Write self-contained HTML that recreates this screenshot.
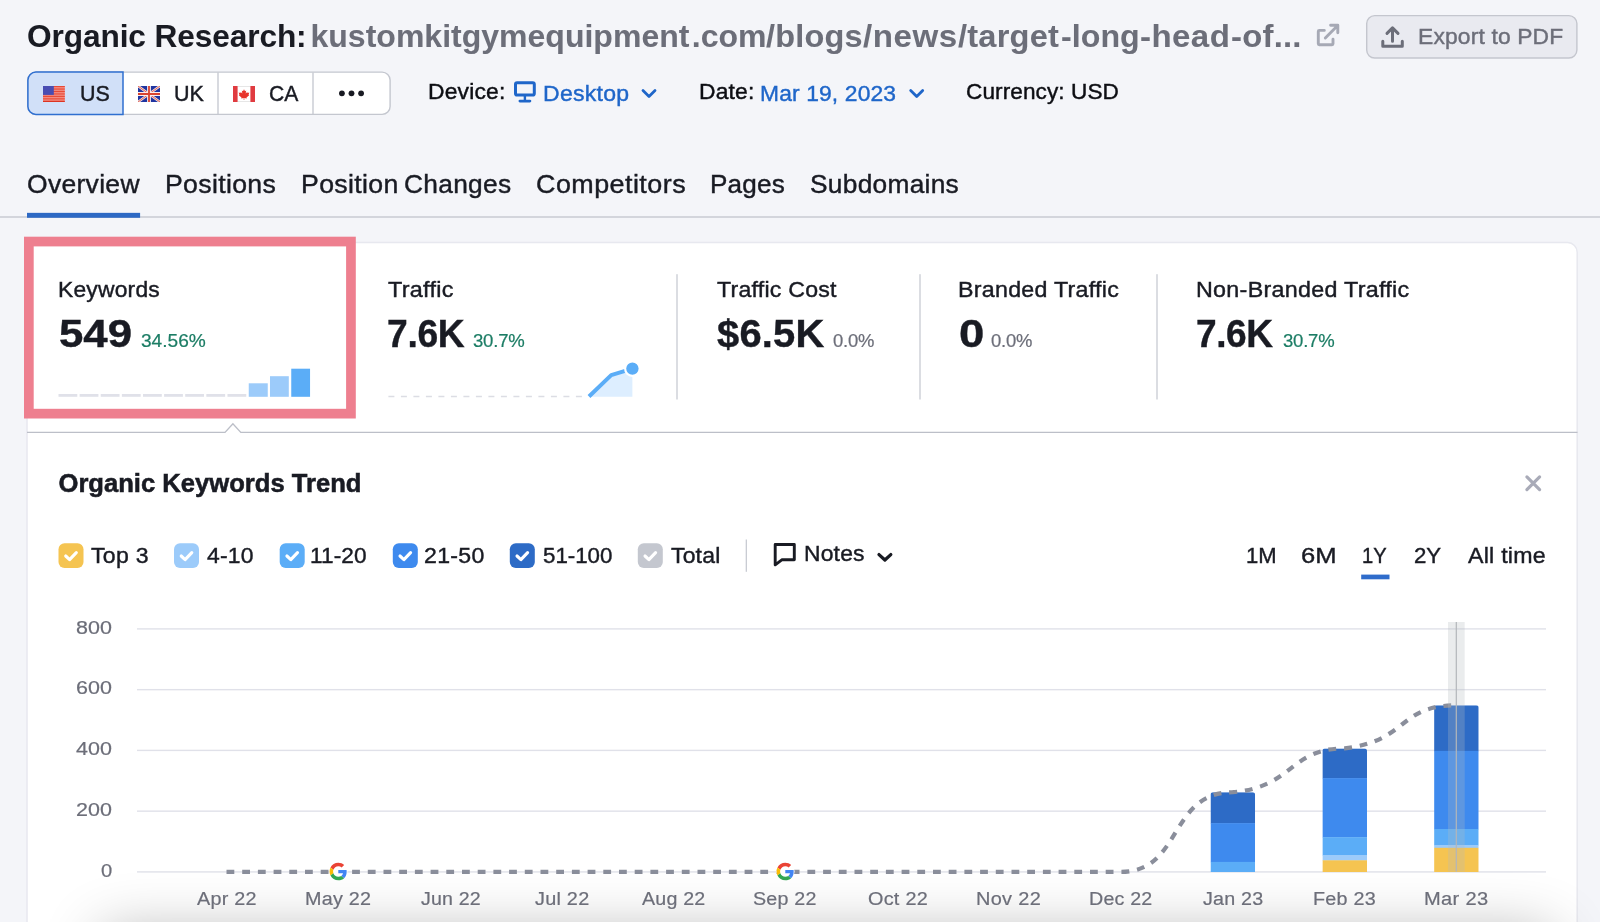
<!DOCTYPE html>
<html lang="en"><head><meta charset="utf-8"><title>Organic Research</title>
<style>
html,body{margin:0;padding:0;}
body{width:1600px;height:922px;overflow:hidden;position:relative;background:#f4f5f9;font-family:"Liberation Sans",sans-serif;}
svg#g{position:absolute;left:0;top:0;width:1600px;height:922px;display:block;}
.shd{position:absolute;left:102px;top:933px;width:1450px;height:80px;box-shadow:0 0 58px 0 rgba(0,0,0,0.30);}
.tx{position:absolute;left:0;top:0;width:1600px;height:922px;will-change:transform;}
.t{position:absolute;white-space:nowrap;line-height:1;transform-origin:0 50%;-webkit-text-stroke:0.42px currentColor;}

</style></head>
<body>
<svg id="g" width="1600" height="922" viewBox="0 0 1600 922">
<rect x="27.9" y="72.1" width="362.2" height="42.3" rx="8" fill="#fff" stroke="#c4c7cf" stroke-width="1.4"/>
<path d="M123 72.1 H35.9 a8 8 0 0 0 -8 8 V106.4 a8 8 0 0 0 8 8 H123 Z" fill="#d1e0f8" stroke="#2f6fd0" stroke-width="1.5"/>
<path d="M218 72.5V114M313 72.5V114" stroke="#c4c7cf" stroke-width="1.3"/>
<circle cx="341.9" cy="93.3" r="2.9" fill="#191b23"/>
<circle cx="351.5" cy="93.3" r="2.9" fill="#191b23"/>
<circle cx="361.1" cy="93.3" r="2.9" fill="#191b23"/>
<g transform="translate(43,86)"><rect width="21.8" height="16" fill="#f48b80"/><rect y="0" width="21.8" height="1.1" fill="#e84a36"/><rect y="2.5" width="21.8" height="1.1" fill="#e84a36"/><rect y="4.95" width="21.8" height="1.1" fill="#e84a36"/><rect y="7.4" width="21.8" height="1.1" fill="#e84a36"/><rect y="9.85" width="21.8" height="1.1" fill="#e84a36"/><rect y="12.3" width="21.8" height="1.1" fill="#e84a36"/><rect y="14.8" width="21.8" height="1.2" fill="#dc3422"/><rect width="10.8" height="8.9" fill="#494db2"/></g>
<g transform="translate(138,86)"><clipPath id="uk"><rect width="22" height="16"/></clipPath><g clip-path="url(#uk)"><rect width="22" height="16" fill="#1f34a0"/><path d="M0 0L22 16M22 0L0 16" stroke="#f4dcdc" stroke-width="2.5"/><path d="M0 0L22 16M22 0L0 16" stroke="#de5a4b" stroke-width="0.9"/><path d="M11 0V16M0 8H22" stroke="#fbeeee" stroke-width="3.8"/><path d="M11 0V16M0 8H22" stroke="#d9432f" stroke-width="1.8"/></g></g>
<g transform="translate(233,86)"><rect width="22" height="16" fill="#fff"/><rect x="4.6" width="12.8" height="0.9" fill="#e4e4e4"/><rect x="4.6" y="15.1" width="12.8" height="0.9" fill="#e4e4e4"/><rect width="4.6" height="16" fill="#e03b40"/><rect x="17.4" width="4.6" height="16" fill="#e03b40"/><path d="M11 3.2l1 2 1.2-.6-.5 2.9 1.5-1.5.4.9 1.7-.3-.7 2.2.6.4-2.7 2.2.3 1-2.5-.4v2.1h-.6v-2.1l-2.5.4.3-1-2.7-2.2.6-.4-.7-2.2 1.7.3.4-.9 1.5 1.5-.5-2.9 1.2.6z" fill="#e8332a"/></g>
<g fill="none" stroke="#1f66c9" stroke-width="3" stroke-linejoin="round" stroke-linecap="round"><rect x="515.5" y="82.7" width="18.8" height="12.4" rx="1.6"/><path d="M524.9 96.5V100.4" stroke-width="2.4"/><path d="M519.9 101.1H529.9" stroke-width="2.8"/></g>
<path d="M643.0 90.5l6 6 6-6" fill="none" stroke="#1f66c9" stroke-width="2.8" stroke-linecap="round" stroke-linejoin="round"/>
<path d="M910.7 90.5l6 6 6-6" fill="none" stroke="#1f66c9" stroke-width="2.8" stroke-linecap="round" stroke-linejoin="round"/>
<g fill="none" stroke="#a6a9b5" stroke-width="2.9" stroke-linejoin="round" stroke-linecap="round"><path d="M1324.3 30.4H1319.3a1 1 0 0 0 -1 1V43.8a1 1 0 0 0 1 1H1332a1 1 0 0 0 1-1V39.2"/><path d="M1325.3 38L1337.2 26M1330.6 25.3H1337.8V32.8"/></g>
<rect x="1366.7" y="15.6" width="210.2" height="42.4" rx="8" fill="#e9eaf0" stroke="#c4c6ce" stroke-width="1.4"/>
<g fill="none" stroke="#6c6e79" stroke-width="3" stroke-linejoin="round" stroke-linecap="round"><path d="M1382.8 41.2V46.3H1402.3V41.2"/><path d="M1392.5 41.2V28.2M1387 33.4L1392.5 27.9L1398 33.4"/></g>
<rect x="0" y="216.2" width="1600" height="1.6" fill="#cbced5"/>
<rect x="27" y="212.85" width="113.1" height="4.95" fill="#2d69c4"/>
<rect x="27" y="242.6" width="1550.2" height="720" rx="9.6" fill="#fff" stroke="#e7e8ef" stroke-width="1.5"/>
<path d="M27 432.4H225L232.9 423.7L240.8 432.4H1577.5" fill="none" stroke="#bcbfc8" stroke-width="1.4"/>
<rect x="676.4" y="274.2" width="1.2" height="125.3" fill="#c4c7cf"/>
<rect x="919.4" y="274.2" width="1.2" height="125.3" fill="#c4c7cf"/>
<rect x="1156.4" y="274.2" width="1.2" height="125.3" fill="#c4c7cf"/>
<rect x="28.85" y="241.55" width="322.1" height="172.1" fill="none" stroke="#ee7f8f" stroke-width="9.7"/>
<rect x="58.50" y="394" width="18.8" height="2.8" fill="#e0e1e9"/>
<rect x="79.62" y="394" width="18.8" height="2.8" fill="#e0e1e9"/>
<rect x="100.74" y="394" width="18.8" height="2.8" fill="#e0e1e9"/>
<rect x="121.86" y="394" width="18.8" height="2.8" fill="#e0e1e9"/>
<rect x="142.98" y="394" width="18.8" height="2.8" fill="#e0e1e9"/>
<rect x="164.10" y="394" width="18.8" height="2.8" fill="#e0e1e9"/>
<rect x="185.22" y="394" width="18.8" height="2.8" fill="#e0e1e9"/>
<rect x="206.34" y="394" width="18.8" height="2.8" fill="#e0e1e9"/>
<rect x="227.46" y="394" width="18.8" height="2.8" fill="#e0e1e9"/>
<rect x="248.75" y="383.3" width="19" height="13.5" fill="#9ccbfa"/>
<rect x="270" y="376.2" width="18.8" height="20.6" fill="#9ccbfa"/>
<rect x="291.25" y="368.7" width="18.8" height="28.1" fill="#5badf7"/>
<path d="M388.4 396.6H583" stroke="#dcdde4" stroke-width="1.5" stroke-dasharray="6 6.5" fill="none"/>
<path d="M589.3 396.8L611.2 375.1L632.4 368.6V396.8Z" fill="#ddeeff"/>
<path d="M589 396.5L611.2 375.1L632.4 368.6" fill="none" stroke="#5badf7" stroke-width="4" stroke-linejoin="round"/>
<circle cx="632.4" cy="368.6" r="7.3" fill="#5badf7" stroke="#fff" stroke-width="2.2"/>
<rect x="58.5" y="543.2" width="25" height="24.8" rx="6" fill="#f5c451"/><path d="M65.70 556.00 l3.9 3.6 l6.7 -6.9" fill="none" stroke="#fff" stroke-width="3.1" stroke-linecap="round" stroke-linejoin="round"/>
<rect x="174" y="543.2" width="25" height="24.8" rx="6" fill="#9ccbfa"/><path d="M181.20 556.00 l3.9 3.6 l6.7 -6.9" fill="none" stroke="#fff" stroke-width="3.1" stroke-linecap="round" stroke-linejoin="round"/>
<rect x="279.7" y="543.2" width="25" height="24.8" rx="6" fill="#5badf7"/><path d="M286.90 556.00 l3.9 3.6 l6.7 -6.9" fill="none" stroke="#fff" stroke-width="3.1" stroke-linecap="round" stroke-linejoin="round"/>
<rect x="392.8" y="543.2" width="25" height="24.8" rx="6" fill="#3e8aee"/><path d="M400.00 556.00 l3.9 3.6 l6.7 -6.9" fill="none" stroke="#fff" stroke-width="3.1" stroke-linecap="round" stroke-linejoin="round"/>
<rect x="509.8" y="543.2" width="25" height="24.8" rx="6" fill="#2d6bc6"/><path d="M517.00 556.00 l3.9 3.6 l6.7 -6.9" fill="none" stroke="#fff" stroke-width="3.1" stroke-linecap="round" stroke-linejoin="round"/>
<rect x="637.8" y="543.2" width="25" height="24.8" rx="6" fill="#c4c7cf"/><path d="M645.00 556.00 l3.9 3.6 l6.7 -6.9" fill="none" stroke="#fff" stroke-width="3.1" stroke-linecap="round" stroke-linejoin="round"/>
<rect x="745.7" y="539.5" width="1.2" height="32.3" fill="#c4c7cf"/>
<path d="M775.2 544.5H794.3V559.8H781.8L775.2 564.8Z" fill="none" stroke="#191b23" stroke-width="2.9" stroke-linejoin="round"/>
<path d="M879 554.6L884.9 560L890.8 554.6" fill="none" stroke="#191b23" stroke-width="3.3" stroke-linecap="round" stroke-linejoin="round"/>
<path d="M1526.9 476.9L1539.6 489.6M1539.6 476.9L1526.9 489.6" stroke="#a9abb8" stroke-width="3.2" stroke-linecap="round"/>
<rect x="1361.2" y="574.6" width="28.3" height="4.7" fill="#2f6ccb"/>
<rect x="137" y="628.20" width="1409" height="1.4" fill="#e0e1e9"/>
<rect x="137" y="688.95" width="1409" height="1.4" fill="#e0e1e9"/>
<rect x="137" y="749.70" width="1409" height="1.4" fill="#e0e1e9"/>
<rect x="137" y="810.45" width="1409" height="1.4" fill="#e0e1e9"/>
<rect x="137" y="871.20" width="1409" height="1.4" fill="#e0e1e9"/>
<clipPath id="c1232"><path d="M1210.5 871.9V794.7a2.5 2.5 0 0 1 2.5-2.5H1252.6a2.5 2.5 0 0 1 2.5 2.5V871.9Z"/></clipPath><g clip-path="url(#c1232)"><rect x="1210.5" y="792.2" width="44.6" height="31.20" fill="#2d6bc6"/><rect x="1210.5" y="823.1" width="44.6" height="39.10" fill="#3e8aee"/><rect x="1210.5" y="861.9" width="44.6" height="10.30" fill="#5badf7"/></g>
<clipPath id="c1344"><path d="M1322.4 871.9V750.9a2.5 2.5 0 0 1 2.5-2.5H1364.5a2.5 2.5 0 0 1 2.5 2.5V871.9Z"/></clipPath><g clip-path="url(#c1344)"><rect x="1322.4" y="748.4" width="44.6" height="30.00" fill="#2d6bc6"/><rect x="1322.4" y="778.1" width="44.6" height="59.40" fill="#3e8aee"/><rect x="1322.4" y="837.2" width="44.6" height="18.40" fill="#5badf7"/><rect x="1322.4" y="855.3" width="44.6" height="5.30" fill="#9ccbfa"/><rect x="1322.4" y="860.3" width="44.6" height="11.90" fill="#f5c451"/></g>
<clipPath id="c1456"><path d="M1434.1000000000001 871.9V707.8a2.5 2.5 0 0 1 2.5-2.5H1476.2a2.5 2.5 0 0 1 2.5 2.5V871.9Z"/></clipPath><g clip-path="url(#c1456)"><rect x="1434.1000000000001" y="705.3" width="44.6" height="45.90" fill="#2d6bc6"/><rect x="1434.1000000000001" y="750.9" width="44.6" height="78.40" fill="#3e8aee"/><rect x="1434.1000000000001" y="829" width="44.6" height="16.60" fill="#5badf7"/><rect x="1434.1000000000001" y="845.3" width="44.6" height="2.80" fill="#9ccbfa"/><rect x="1434.1000000000001" y="847.8" width="44.6" height="24.40" fill="#f5c451"/></g>
<path d="M226.5 871.9 L338.00 871.90 L450.00 871.90 L561.50 871.90 L673.00 871.90 L785.00 871.90 L897.00 871.90 L1009.00 871.90 L1121.00 871.90 C1182.49 871.90 1168.51 792.20 1232.80 792.20 C1294.35 786.97 1288.75 748.40 1344.70 748.40 C1408.93 740.69 1397.76 705.30 1456.40 705.30" fill="none" stroke="#8a8e9b" stroke-width="4.2" stroke-dasharray="7.8 7.9"/>
<rect x="1448" y="622" width="16.7" height="249.6" fill="#b4bac0" fill-opacity="0.28"/>
<rect x="1455.7" y="622" width="1.2" height="249.6" fill="#b3b6ba"/>
<g transform="translate(329.55,862.75) scale(0.3645833333333333)"><circle cx="24" cy="24" r="25.5" fill="#fff"/><path fill="#EA4335" d="M24 9.5c3.54 0 6.71 1.22 9.21 3.6l6.85-6.85C35.9 2.38 30.47 0 24 0 14.62 0 6.51 5.38 2.56 13.22l7.98 6.19C12.43 13.72 17.74 9.5 24 9.5z"/><path fill="#4285F4" d="M46.98 24.55c0-1.57-.15-3.09-.38-4.55H24v9.02h12.94c-.58 2.96-2.26 5.48-4.78 7.18l7.73 6c4.51-4.18 7.09-10.36 7.09-17.65z"/><path fill="#FBBC05" d="M10.53 28.59c-.48-1.45-.76-2.99-.76-4.59s.27-3.14.76-4.59l-7.98-6.19C.92 16.46 0 20.12 0 24c0 3.88.92 7.54 2.56 10.78l7.97-6.19z"/><path fill="#34A853" d="M24 48c6.48 0 11.93-2.13 15.89-5.81l-7.73-6c-2.15 1.45-4.92 2.3-8.16 2.3-6.26 0-11.57-4.22-13.47-9.91l-7.98 6.19C6.51 42.62 14.62 48 24 48z"/></g>
<g transform="translate(776.55,862.75) scale(0.3645833333333333)"><circle cx="24" cy="24" r="25.5" fill="#fff"/><path fill="#EA4335" d="M24 9.5c3.54 0 6.71 1.22 9.21 3.6l6.85-6.85C35.9 2.38 30.47 0 24 0 14.62 0 6.51 5.38 2.56 13.22l7.98 6.19C12.43 13.72 17.74 9.5 24 9.5z"/><path fill="#4285F4" d="M46.98 24.55c0-1.57-.15-3.09-.38-4.55H24v9.02h12.94c-.58 2.96-2.26 5.48-4.78 7.18l7.73 6c4.51-4.18 7.09-10.36 7.09-17.65z"/><path fill="#FBBC05" d="M10.53 28.59c-.48-1.45-.76-2.99-.76-4.59s.27-3.14.76-4.59l-7.98-6.19C.92 16.46 0 20.12 0 24c0 3.88.92 7.54 2.56 10.78l7.97-6.19z"/><path fill="#34A853" d="M24 48c6.48 0 11.93-2.13 15.89-5.81l-7.73-6c-2.15 1.45-4.92 2.3-8.16 2.3-6.26 0-11.57-4.22-13.47-9.91l-7.98 6.19C6.51 42.62 14.62 48 24 48z"/></g>
</svg>
<div class="shd"></div>
<div class="tx">
<span class="t" style="left:27.01px;top:20px;font-size:32px;color:#191b23;font-weight:700;-webkit-text-stroke-width:0.05px;letter-spacing:-0.093px;transform:scaleX(0.9878);">Organic Research:</span>
<span class="t" style="left:310.50px;top:20px;font-size:32px;color:#6c6e79;font-weight:700;-webkit-text-stroke-width:0.05px;letter-spacing:0.009px;">kustomkitgymequipment</span>
<span class="t" style="left:691.75px;top:20px;font-size:32px;color:#6c6e79;font-weight:700;-webkit-text-stroke-width:0.05px;">.com</span>
<span class="t" style="left:766.25px;top:20px;font-size:32px;color:#6c6e79;font-weight:700;-webkit-text-stroke-width:0.05px;letter-spacing:0.184px;transform:scaleX(1.0150);">/blogs</span>
<span class="t" style="left:863.00px;top:20px;font-size:32px;color:#6c6e79;font-weight:700;-webkit-text-stroke-width:0.05px;letter-spacing:0.495px;transform:scaleX(1.0349);">/news</span>
<span class="t" style="left:957.50px;top:20px;font-size:32px;color:#6c6e79;font-weight:700;-webkit-text-stroke-width:0.05px;letter-spacing:0.203px;transform:scaleX(1.0190);">/target</span>
<span class="t" style="left:1061.30px;top:20px;font-size:32px;color:#6c6e79;font-weight:700;-webkit-text-stroke-width:0.05px;letter-spacing:0.056px;transform:scaleX(1.0044);">-long</span>
<span class="t" style="left:1140.27px;top:20px;font-size:32px;color:#6c6e79;font-weight:700;-webkit-text-stroke-width:0.05px;letter-spacing:0.427px;transform:scaleX(1.0319);">-head</span>
<span class="t" style="left:1231.27px;top:20px;font-size:32px;color:#6c6e79;font-weight:700;-webkit-text-stroke-width:0.05px;letter-spacing:0.223px;transform:scaleX(1.0265);">-of...</span>
<span class="t" style="left:79.54px;top:83px;font-size:22.4px;color:#191b23;transform:scaleX(0.9599);">US</span>
<span class="t" style="left:174.04px;top:83px;font-size:22.4px;color:#191b23;transform:scaleX(0.9612);">UK</span>
<span class="t" style="left:268.56px;top:83px;font-size:22.4px;color:#191b23;transform:scaleX(0.9430);">CA</span>
<span class="t" style="left:428.48px;top:81px;font-size:22.4px;color:#0d0e13;letter-spacing:0.167px;transform:translateY(0.30px) scaleX(1.0212);">Device:</span>
<span class="t" style="left:543.47px;top:82px;font-size:22.4px;color:#1f66c9;letter-spacing:0.247px;transform:translateY(0.60px) scaleX(1.0284);">Desktop</span>
<span class="t" style="left:698.98px;top:81px;font-size:22.4px;color:#0d0e13;letter-spacing:0.167px;transform:translateY(0.30px) scaleX(1.0199);">Date:</span>
<span class="t" style="left:759.98px;top:82px;font-size:22.4px;color:#1f66c9;letter-spacing:0.143px;transform:translateY(0.60px) scaleX(1.0185);">Mar 19, 2023</span>
<span class="t" style="left:965.99px;top:81px;font-size:22.4px;color:#0d0e13;letter-spacing:0.078px;transform:translateY(0.30px) scaleX(1.0095);">Currency: USD</span>
<span class="t" style="left:1417.98px;top:26px;font-size:22.4px;color:#6c6e79;letter-spacing:0.149px;transform:scaleX(1.0197);">Export to PDF</span>
<span class="t" style="left:26.97px;top:172px;font-size:25.6px;color:#191b23;letter-spacing:0.322px;transform:scaleX(1.0329);">Overview</span>
<span class="t" style="left:165.32px;top:172px;font-size:25.6px;color:#191b23;letter-spacing:0.329px;transform:scaleX(1.0407);">Positions</span>
<span class="t" style="left:300.67px;top:172px;font-size:25.6px;color:#191b23;letter-spacing:0.339px;transform:scaleX(1.0422);">Position</span>
<span class="t" style="left:404.37px;top:172px;font-size:25.6px;color:#191b23;letter-spacing:0.301px;transform:scaleX(1.0277);">Changes</span>
<span class="t" style="left:536.45px;top:172px;font-size:25.6px;color:#191b23;letter-spacing:0.439px;transform:scaleX(1.0508);">Competitors</span>
<span class="t" style="left:710.16px;top:172px;font-size:25.6px;color:#191b23;letter-spacing:0.219px;transform:scaleX(1.0192);">Pages</span>
<span class="t" style="left:810.47px;top:172px;font-size:25.6px;color:#191b23;letter-spacing:0.278px;transform:scaleX(1.0274);">Subdomains</span>
<span class="t" style="left:57.98px;top:279px;font-size:22.4px;color:#191b23;letter-spacing:0.190px;transform:scaleX(1.0209);">Keywords</span>
<span class="t" style="left:58.86px;top:315px;font-size:38.4px;color:#191b23;font-weight:700;-webkit-text-stroke-width:0.4px;transform:scaleX(1.1410);">549</span>
<span class="t" style="left:140.75px;top:331px;font-size:19.2px;color:#1c7d65;-webkit-text-stroke-width:0.22px;letter-spacing:-0.016px;transform:scaleX(0.9971);">34.56%</span>
<span class="t" style="left:388.00px;top:279px;font-size:22.4px;color:#191b23;letter-spacing:0.286px;transform:scaleX(1.0443);">Traffic</span>
<span class="t" style="left:387.03px;top:315px;font-size:38.4px;color:#191b23;font-weight:700;-webkit-text-stroke-width:0.4px;letter-spacing:-0.347px;transform:scaleX(0.9707);">7.6K</span>
<span class="t" style="left:473.25px;top:331px;font-size:19.2px;color:#1c7d65;-webkit-text-stroke-width:0.22px;letter-spacing:-0.201px;transform:scaleX(0.9666);">30.7%</span>
<span class="t" style="left:716.75px;top:279px;font-size:22.4px;color:#191b23;letter-spacing:0.220px;transform:scaleX(1.0329);">Traffic Cost</span>
<span class="t" style="left:717.00px;top:315px;font-size:38.4px;color:#191b23;font-weight:700;-webkit-text-stroke-width:0.4px;letter-spacing:0.172px;transform:scaleX(1.0396);">$6.5K</span>
<span class="t" style="left:832.50px;top:331px;font-size:19.2px;color:#6c6e79;-webkit-text-stroke-width:0.22px;letter-spacing:-0.252px;transform:scaleX(0.9612);">0.0%</span>
<span class="t" style="left:957.71px;top:279px;font-size:22.4px;color:#191b23;letter-spacing:0.258px;transform:scaleX(1.0373);">Branded Traffic</span>
<span class="t" style="left:958.82px;top:315px;font-size:38.4px;color:#191b23;font-weight:700;-webkit-text-stroke-width:0.4px;transform:scaleX(1.1842);">0</span>
<span class="t" style="left:991.25px;top:331px;font-size:19.2px;color:#6c6e79;-webkit-text-stroke-width:0.22px;letter-spacing:-0.252px;transform:scaleX(0.9612);">0.0%</span>
<span class="t" style="left:1195.96px;top:279px;font-size:22.4px;color:#191b23;letter-spacing:0.283px;transform:scaleX(1.0398);">Non-Branded Traffic</span>
<span class="t" style="left:1196.03px;top:315px;font-size:38.4px;color:#191b23;font-weight:700;-webkit-text-stroke-width:0.4px;letter-spacing:-0.411px;transform:scaleX(0.9654);">7.6K</span>
<span class="t" style="left:1282.80px;top:331px;font-size:19.2px;color:#1c7d65;-webkit-text-stroke-width:0.22px;letter-spacing:-0.213px;transform:scaleX(0.9646);">30.7%</span>
<span class="t" style="left:58.50px;top:471px;font-size:25.6px;color:#191b23;font-weight:700;-webkit-text-stroke-width:0.55px;">Organic Keywords Trend</span>
<span class="t" style="left:90.50px;top:545px;font-size:22.4px;color:#191b23;letter-spacing:0.260px;transform:scaleX(1.0296);">Top 3</span>
<span class="t" style="left:207.00px;top:545px;font-size:22.4px;color:#191b23;letter-spacing:0.214px;transform:scaleX(1.0222);">4-10</span>
<span class="t" style="left:310.24px;top:545px;font-size:22.4px;color:#191b23;letter-spacing:0.084px;transform:scaleX(1.0094);">11-20</span>
<span class="t" style="left:423.97px;top:545px;font-size:22.4px;color:#191b23;letter-spacing:0.285px;transform:scaleX(1.0316);">21-50</span>
<span class="t" style="left:542.50px;top:545px;font-size:22.4px;color:#191b23;letter-spacing:-0.022px;transform:scaleX(0.9963);">51-100</span>
<span class="t" style="left:671.25px;top:545px;font-size:22.4px;color:#191b23;letter-spacing:0.188px;transform:scaleX(1.0250);">Total</span>
<span class="t" style="left:804.38px;top:543px;font-size:22.4px;color:#191b23;letter-spacing:0.196px;transform:scaleX(1.0210);">Notes</span>
<span class="t" style="left:1246.02px;top:545px;font-size:22.4px;color:#191b23;transform:scaleX(0.9841);">1M</span>
<span class="t" style="left:1300.86px;top:545px;font-size:22.4px;color:#191b23;transform:scaleX(1.1423);">6M</span>
<span class="t" style="left:1361.60px;top:545px;font-size:22.4px;color:#191b23;letter-spacing:-0.064px;transform:scaleX(0.9000);">1Y</span>
<span class="t" style="left:1414.01px;top:545px;font-size:22.4px;color:#191b23;transform:scaleX(0.9923);">2Y</span>
<span class="t" style="left:1468.25px;top:545px;font-size:22.4px;color:#191b23;letter-spacing:0.237px;transform:scaleX(1.0354);">All time</span>
<span class="t" style="left:76.10px;top:617px;font-size:19.2px;color:#6c6e79;-webkit-text-stroke-width:0.22px;transform:translateY(0.60px) scaleX(1.1199);">800</span>
<span class="t" style="left:76.10px;top:678px;font-size:19.2px;color:#6c6e79;-webkit-text-stroke-width:0.22px;transform:translateY(0.30px) scaleX(1.1199);">600</span>
<span class="t" style="left:76.10px;top:739px;font-size:19.2px;color:#6c6e79;-webkit-text-stroke-width:0.22px;transform:translateY(0.10px) scaleX(1.1199);">400</span>
<span class="t" style="left:76.10px;top:799px;font-size:19.2px;color:#6c6e79;-webkit-text-stroke-width:0.22px;transform:translateY(0.80px) scaleX(1.1199);">200</span>
<span class="t" style="left:101.00px;top:860px;font-size:19.2px;color:#6c6e79;-webkit-text-stroke-width:0.22px;transform:translateY(0.60px) scaleX(1.0500);">0</span>
<span class="t" style="left:197.10px;top:888px;font-size:19.2px;color:#6c6e79;-webkit-text-stroke-width:0.22px;letter-spacing:0.228px;transform:translateY(0.50px) scaleX(1.0316);">Apr 22</span>
<span class="t" style="left:304.87px;top:888px;font-size:19.2px;color:#6c6e79;-webkit-text-stroke-width:0.22px;letter-spacing:0.229px;transform:translateY(0.50px) scaleX(1.0289);">May 22</span>
<span class="t" style="left:420.50px;top:888px;font-size:19.2px;color:#6c6e79;-webkit-text-stroke-width:0.22px;letter-spacing:0.161px;transform:translateY(0.50px) scaleX(1.0217);">Jun 22</span>
<span class="t" style="left:534.75px;top:888px;font-size:19.2px;color:#6c6e79;-webkit-text-stroke-width:0.22px;letter-spacing:0.230px;transform:translateY(0.50px) scaleX(1.0353);">Jul 22</span>
<span class="t" style="left:641.75px;top:888px;font-size:19.2px;color:#6c6e79;-webkit-text-stroke-width:0.22px;letter-spacing:0.184px;transform:translateY(0.50px) scaleX(1.0235);">Aug 22</span>
<span class="t" style="left:753.30px;top:888px;font-size:19.2px;color:#6c6e79;-webkit-text-stroke-width:0.22px;letter-spacing:0.200px;transform:translateY(0.50px) scaleX(1.0255);">Sep 22</span>
<span class="t" style="left:867.50px;top:888px;font-size:19.2px;color:#6c6e79;-webkit-text-stroke-width:0.22px;letter-spacing:0.244px;transform:translateY(0.50px) scaleX(1.0338);">Oct 22</span>
<span class="t" style="left:976.46px;top:888px;font-size:19.2px;color:#6c6e79;-webkit-text-stroke-width:0.22px;letter-spacing:0.298px;transform:translateY(0.50px) scaleX(1.0393);">Nov 22</span>
<span class="t" style="left:1089.23px;top:888px;font-size:19.2px;color:#6c6e79;-webkit-text-stroke-width:0.22px;letter-spacing:0.186px;transform:translateY(0.50px) scaleX(1.0241);">Dec 22</span>
<span class="t" style="left:1202.75px;top:888px;font-size:19.2px;color:#6c6e79;-webkit-text-stroke-width:0.22px;letter-spacing:0.200px;transform:translateY(0.50px) scaleX(1.0270);">Jan 23</span>
<span class="t" style="left:1312.97px;top:888px;font-size:19.2px;color:#6c6e79;-webkit-text-stroke-width:0.22px;letter-spacing:0.228px;transform:translateY(0.50px) scaleX(1.0303);">Feb 23</span>
<span class="t" style="left:1424.20px;top:888px;font-size:19.2px;color:#6c6e79;-webkit-text-stroke-width:0.22px;letter-spacing:0.341px;transform:translateY(0.50px) scaleX(1.0460);">Mar 23</span>
</div>
</body></html>
